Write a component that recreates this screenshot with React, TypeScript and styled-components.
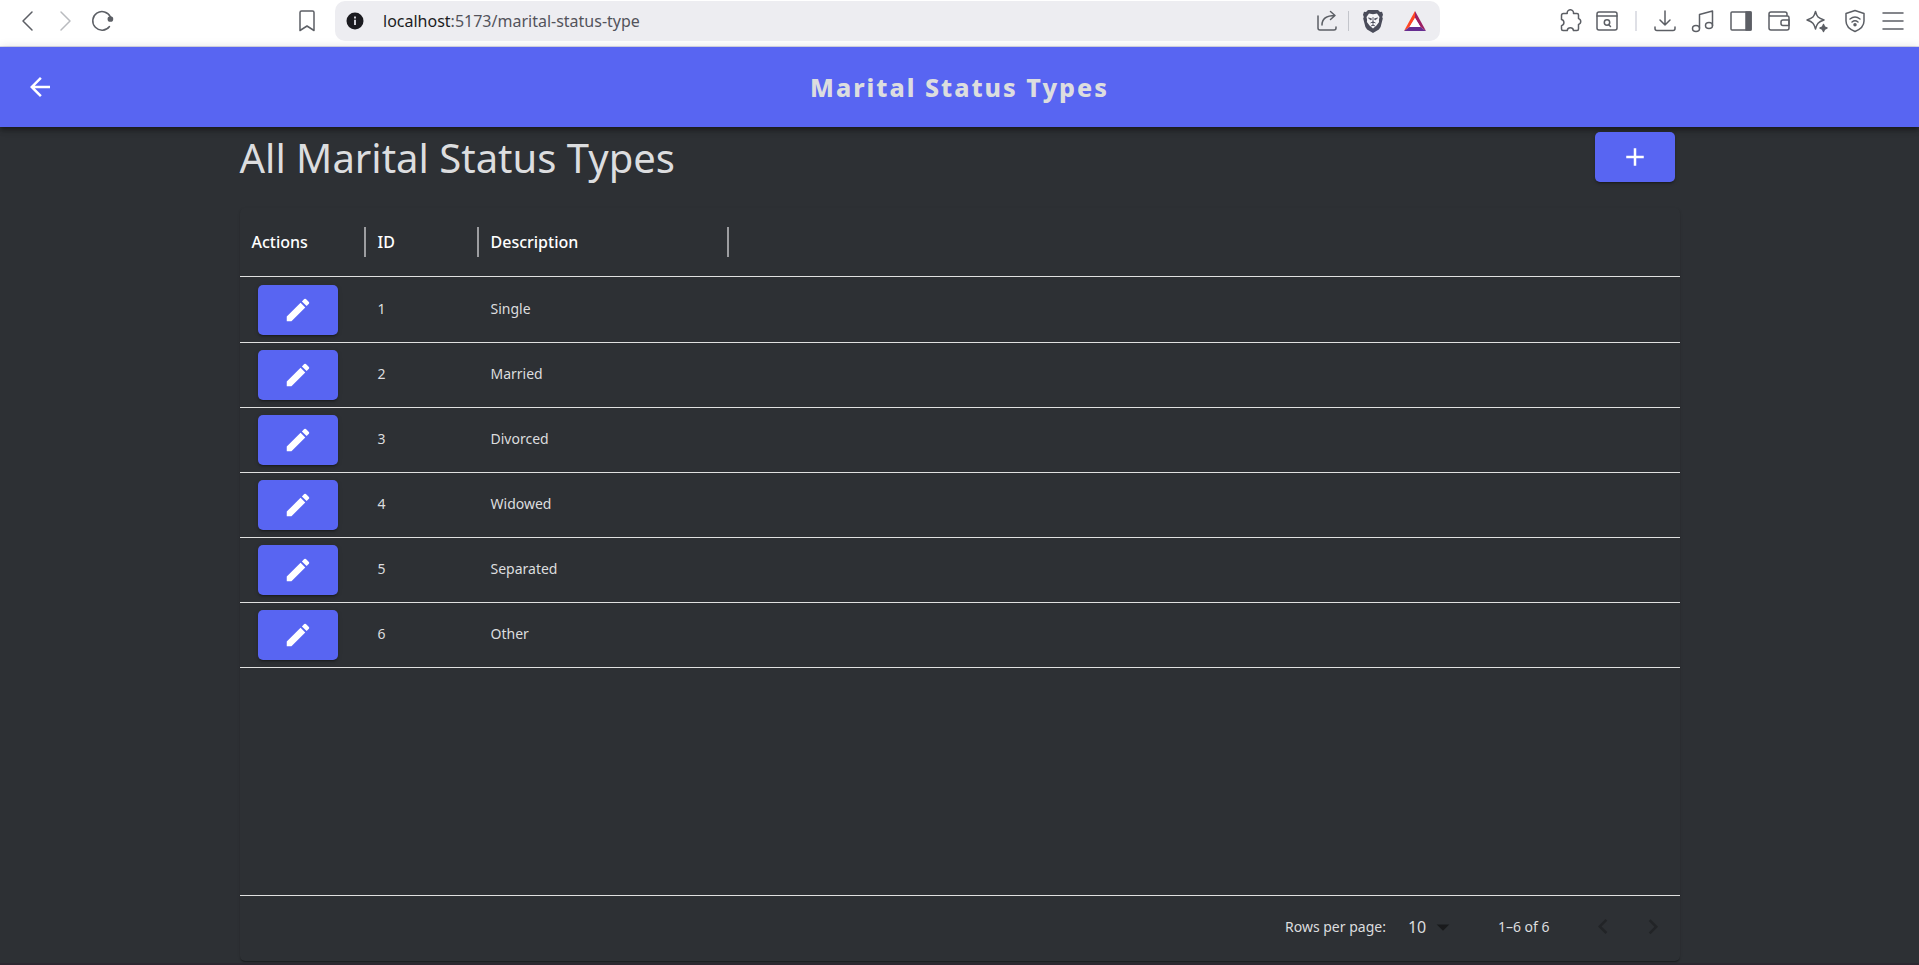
import React from "react";
import styled, { createGlobalStyle } from "styled-components";

const GlobalStyle = createGlobalStyle`
  * { box-sizing: border-box; }
  body {
    margin: 0;
    background: #2d3034;
    color: #dcdddf;
    font-family: Tahoma, "Noto Sans", sans-serif;
  }
  button { font: inherit; border: 0; padding: 0; background: none; color: inherit; cursor: pointer; }
  svg { flex-shrink: 0; }
`;

/* Browser bar */
const BrowserBar = styled.div`
  display: flex;
  align-items: center;
  height: 47px;
  padding: 0 14px 4px 15px;
  background: #ffffff;
  border-bottom: 1px solid #dedeee;
`;

const NavGroup = styled.div`
  display: flex;
  align-items: center;
  gap: 14px;
  flex: 0 1 320px;
`;

const BarButton = styled.button<{ $faded?: boolean }>`
  display: flex;
  width: 24px;
  height: 24px;
  align-items: center;
  justify-content: center;
  color: ${(p) => (p.$faded ? "#b9bbbf" : "#5c5f65")};
`;

const Bookmark = styled(BarButton)`
  margin-left: auto;
  margin-right: 16px;
`;

const AddressBar = styled.div`
  display: flex;
  align-items: center;
  flex: 0 1 1105px;
  height: 40px;
  padding: 0 13px 0 8px;
  border-radius: 10px;
  background: #ededf1;
  gap: 16px;
`;

const Url = styled.div`
  flex: 1;
  font-family: "Segoe UI", "Noto Sans", sans-serif;
  font-size: 16px;
  line-height: 24px;
  color: #53535b;
`;

const Host = styled.span`
  color: #1b1b22;
`;

const Divider = styled.span<{ $color: string; $width: number }>`
  width: ${(p) => p.$width}px;
  height: 20px;
  background: ${(p) => p.$color};
`;

const AddressActions = styled.div`
  display: flex;
  align-items: center;
  gap: 9px;
`;

const ShieldGroup = styled.div`
  display: flex;
  gap: 18px;
  margin-left: 3px;
`;

const ToolGroup = styled.div`
  display: flex;
  flex: 1;
  align-items: center;
  justify-content: flex-end;
  gap: 16px;
`;

const ToolCluster = styled.div<{ $gap: number }>`
  display: flex;
  align-items: center;
  gap: ${(p) => p.$gap}px;
`;

/* Application */
const AppBar = styled.header`
  display: grid;
  grid-template-columns: 80px 1fr 80px;
  align-items: center;
  height: 80px;
  background: #5865f2;
  box-shadow: 0 2px 4px -1px rgba(0, 0, 0, 0.3), 0 4px 5px rgba(0, 0, 0, 0.2), 0 1px 10px rgba(0, 0, 0, 0.14);
`;

const BackButton = styled.button`
  display: flex;
  justify-content: center;
  color: #ffffff;
`;

const AppTitle = styled.h1`
  margin: 0;
  text-align: center;
  font-size: 25px;
  line-height: 32px;
  font-weight: 800;
  letter-spacing: 2px;
`;

const Page = styled.main`
  width: 100%;
  max-width: 1440px;
  margin: 0 auto;
  padding: 5px 0 2px;
`;

const PageHead = styled.div`
  display: flex;
  justify-content: space-between;
  align-items: flex-start;
  height: 76px;
  padding-right: 5px;
`;

const PageTitle = styled.h2`
  margin: 0;
  font-size: 40px;
  line-height: 52px;
  font-weight: 400;
`;

const PrimaryButton = styled.button`
  display: flex;
  width: 80px;
  height: 50px;
  align-items: center;
  justify-content: center;
  border-radius: 5px;
  background: #5865f2;
  color: #ffffff;
  box-shadow: 0 3px 1px -2px rgba(0, 0, 0, 0.2), 0 2px 2px rgba(0, 0, 0, 0.14), 0 1px 5px rgba(0, 0, 0, 0.12);
`;

const Panel = styled.section`
  border-radius: 5px;
  box-shadow: 0 2px 1px -1px rgba(0, 0, 0, 0.2), 0 1px 1px rgba(0, 0, 0, 0.14), 0 1px 3px rgba(0, 0, 0, 0.12);
`;

const TableArea = styled.div`
  min-height: 688px;
  border-bottom: 1px solid #e0e0e0;
`;

const Table = styled.table`
  width: 100%;
  table-layout: fixed;
  border-collapse: separate;
  border-spacing: 0;

  tbody::before {
    content: "";
    display: block;
    height: 1px;
  }
`;

const HeadCell = styled.th<{ $width?: number }>`
  width: ${(p) => (p.$width ? p.$width + "px" : "auto")};
  height: 69px;
  padding: 0;
  border-bottom: 1px solid #e0e0e0;
  text-align: left;
  font-size: 16px;
  font-weight: 500;
  color: #ffffff;
`;

const HeadLabel = styled.div`
  height: 30px;
  padding-left: 12px;
  line-height: 30px;
  border-right: 2px solid #9c9da0;
`;

const Cell = styled.td`
  height: 65px;
  padding: 0 12px 2px;
  border-bottom: 1px solid #e0e0e0;
  font-size: 14px;
  line-height: 20px;
`;

const ActionCell = styled(Cell)`
  padding: 7px 18px;
`;

const Footer = styled.footer`
  display: flex;
  align-items: center;
  justify-content: flex-end;
  height: 65px;
  padding: 0 2px 4px 0;
  font-size: 14px;
`;

const RowsLabel = styled.label`
  margin-right: 22px;
`;

const SelectWrap = styled.div`
  display: grid;
  align-items: center;
  margin-right: 45px;
`;

const RowsSelect = styled.select`
  grid-area: 1 / 1;
  width: 45px;
  height: 30px;
  padding: 0;
  border: 0;
  appearance: none;
  background: transparent;
  color: inherit;
  font: inherit;
  font-size: 16px;
`;

const Caret = styled.span`
  grid-area: 1 / 1;
  justify-self: end;
  display: flex;
  width: 20px;
  justify-content: center;
  color: #191a1c;
  pointer-events: none;
`;

const Range = styled.span`
  margin-right: 28px;
`;

const PageButton = styled.button`
  display: flex;
  width: 50px;
  height: 50px;
  align-items: center;
  justify-content: center;
  color: #222427;
`;

const BottomEdge = styled.div`
  height: 2px;
  background: #2c2730;
`;

const MaterialIcon = ({ d }: { d: string }) => (
  <svg width="30" height="30" viewBox="0 0 24 24" fill="currentColor" aria-hidden="true">
    <path d={d} />
  </svg>
);

const paths = {
  back: "M20 11H7.83l5.59-5.59L12 4l-8 8 8 8 1.41-1.41L7.83 13H20z",
  add: "M19 13h-6v6h-2v-6H5v-2h6V5h2v6h6z",
  edit: "M3 17.25V21h3.75L17.81 9.94l-3.75-3.75zM20.71 7.04c.39-.39.39-1.02 0-1.41l-2.34-2.34a1 1 0 0 0-1.41 0l-1.83 1.83 3.75 3.75z",
  caret: "M7 10l5 5 5-5z",
  left: "M15.41 16.09l-4.58-4.59 4.58-4.59L14 5.5l-6 6 6 6z",
  right: "M8.59 16.34l4.58-4.59-4.58-4.59L10 5.75l6 6-6 6z",
};

const LineIcon = ({ children }: { children: React.ReactNode }) => (
  <svg
    width="24"
    height="24"
    viewBox="0 0 24 24"
    fill="none"
    stroke="currentColor"
    strokeWidth="1.5"
    strokeLinecap="round"
    strokeLinejoin="round"
    aria-hidden="true"
  >
    {children}
  </svg>
);

const statuses = ["Single", "Married", "Divorced", "Widowed", "Separated", "Other"];

export default function App() {
  return (
    <>
      <GlobalStyle />
      <BrowserBar>
        <NavGroup>
          <BarButton aria-label="Back">
            <LineIcon><path d="M17 3 8 12l9 9" /></LineIcon>
          </BarButton>
          <BarButton aria-label="Forward" $faded>
            <LineIcon><path d="m8 3 9 9-9 9" /></LineIcon>
          </BarButton>
          <BarButton aria-label="Reload">
            <LineIcon>
              <path d="M18.500 17.500A9.300 9.300 0 1 1 19.500 8" />
              <circle cx="19.400" cy="10" r="2.100" fill="currentColor" />
            </LineIcon>
          </BarButton>
          <Bookmark aria-label="Bookmark">
            <LineIcon><path d="M5 3.500a1.500 1.500 0 0 1 1.500-1.500h11A1.500 1.500 0 0 1 19 3.500V21.500l-7-4.500-7 4.500z" /></LineIcon>
          </Bookmark>
        </NavGroup>
        <AddressBar>
          <BarButton aria-label="Site information">
            <svg width="18" height="18" viewBox="0 0 18 18" aria-hidden="true">
              <circle cx="9" cy="9" r="8.500" fill="#1b1b20" />
              <path d="M8 7.800h2V13H8zM8 4.600h2v2H8z" fill="#d0d0d6" />
            </svg>
          </BarButton>
          <Url><Host>localhost</Host>:5173/marital-status-type</Url>
          <AddressActions>
            <BarButton aria-label="Share">
              <LineIcon>
                <path d="M3 7v12a2 2 0 0 0 2 2h14a2 2 0 0 0 2-2v-1" />
                <path d="M7 16c0-6 4-9.500 13-9.500M15.500 2.500l4.500 4-4.500 4" />
              </LineIcon>
            </BarButton>
            <Divider $color="#c3c5cb" $width={1} />
            <ShieldGroup>
              <BarButton aria-label="Shields">
                <svg width="22" height="24" viewBox="0 0 22 24" aria-hidden="true">
                  <path d="M6 1h10l2 2 2-.2 1 3-.8 2.200.6 1.500-2.200 8.500-1.700 2.500L11 24l-5.900-3.500L3.400 18 1.200 9.500l.6-1.500L1 5.800l1-3L4 3z" fill="#4a4c5a" />
                  <path d="m7 4.500 4 .7 4-.7 2.500 3.500-.6 3 .2 2-2.600 3.500L11 19.500l-3.500-3L4.900 13l.2-2-.6-3z" fill="#f5f5f8" />
                  <path d="m6.500 9 3 .8-.6 1.200zM15.500 9l-3 .8.6 1.200zM11 8v5M8.500 14l2.500-1.200 2.500 1.200M11 13v3M9 17l2-1 2 1" fill="#4a4c5a" stroke="#4a4c5a" strokeWidth=".8" />
                </svg>
              </BarButton>
              <BarButton aria-label="Rewards">
                <svg width="24" height="22" viewBox="0 0 24 22" aria-hidden="true">
                  <path d="M12 1v7L6.500 17 1 21z" fill="#ff4724" />
                  <path d="M12 1v7l5.500 9 5.500 4z" fill="#9e1f63" />
                  <path d="m1 21 5.500-4h11l5.500 4z" fill="#662d91" />
                  <path d="m12 8 5.500 9h-11z" fill="#fff" />
                </svg>
              </BarButton>
            </ShieldGroup>
          </AddressActions>
        </AddressBar>
        <ToolGroup>
          <ToolCluster $gap={12}>
            <BarButton aria-label="Extensions">
              <LineIcon>
                <path d="M2.500 6.500q0-2 2-2h3.700a3.200 3.200 0 1 1 6.300 0H18q1.500 0 1.500 1.500v3.600a3 3 0 0 1 0 5.800V20q0 1.500-1.500 1.500h-3.500a3.200 3.200 0 0 0-6.300 0H4q-1.500 0-1.500-1.500v-3.300a3.200 3.200 0 0 0 0-6.200z" />
              </LineIcon>
            </BarButton>
            <BarButton aria-label="Search page">
              <LineIcon>
                <rect x="2" y="3" width="20" height="18" rx="2" />
                <path d="M2 7h20m-6.500 10.500-2-2" />
                <circle cx="12" cy="13.500" r="2.700" />
              </LineIcon>
            </BarButton>
          </ToolCluster>
          <Divider $color="#dfe0e6" $width={2} />
          <ToolCluster $gap={14}>
            <BarButton aria-label="Downloads">
              <LineIcon>
                <path d="M12 2v14m-5-5 5 5 5-5M2 18v1.500a2 2 0 0 0 2 2h16a2 2 0 0 0 2-2V18" />
              </LineIcon>
            </BarButton>
            <BarButton aria-label="Music">
              <LineIcon>
                <ellipse cx="5" cy="19.500" rx="3.500" ry="3" />
                <ellipse cx="18" cy="16.500" rx="3.500" ry="3" />
                <path d="M8.500 19V5.500l13-3.500v14.500" />
              </LineIcon>
            </BarButton>
            <BarButton aria-label="Side panel">
              <LineIcon>
                <rect x="2" y="3" width="20" height="18" rx="1" />
                <path d="M17 3h5v18h-5z" fill="currentColor" />
              </LineIcon>
            </BarButton>
            <BarButton aria-label="Wallet">
              <LineIcon>
                <path d="M20 7V5a2 2 0 0 0-2-2H4a2 2 0 0 0-2 2v14a2 2 0 0 0 2 2h16a2 2 0 0 0 2-2V8.500A1.500 1.500 0 0 0 20.500 7H3.500A1.500 1.500 0 0 1 2 5.500" />
                <path d="M22 11h-6a2 2 0 0 0-2 2v1.500a2 2 0 0 0 2 2h6z" />
              </LineIcon>
            </BarButton>
            <BarButton aria-label="Assistant">
              <LineIcon>
                <path d="M10.500 2.500c1.500 5.500 2.500 6.500 8.500 8.500-6 2-7 3.500-8.500 9-1.500-5.500-2.500-7-8.500-9 6-2 7-3 8.500-8.500z" />
                <path d="M18.500 15.500q.5 3 3.500 3.500-3 .5-3.500 3.500-.5-3-3.500-3.500 3-.5 3.500-3.500z" fill="currentColor" />
              </LineIcon>
            </BarButton>
            <BarButton aria-label="VPN">
              <LineIcon>
                <path d="m12 1.500 9 3v7.500c0 5-4 8.500-9 10.500-5-2-9-5.500-9-10.500V4.500z" />
                <path d="M7 10q5-4 10 0M9 13q3-2.400 6 0" />
                <circle cx="12" cy="15.700" r="1" fill="currentColor" />
              </LineIcon>
            </BarButton>
            <BarButton aria-label="Menu">
              <LineIcon><path d="M2 4h20M2 12h20M2 20h20" /></LineIcon>
            </BarButton>
          </ToolCluster>
        </ToolGroup>
      </BrowserBar>

      <AppBar>
        <BackButton aria-label="Go back"><MaterialIcon d={paths.back} /></BackButton>
        <AppTitle>Marital Status Types</AppTitle>
      </AppBar>

      <Page>
        <PageHead>
          <PageTitle>All Marital Status Types</PageTitle>
          <PrimaryButton aria-label="Add"><MaterialIcon d={paths.add} /></PrimaryButton>
        </PageHead>
        <Panel>
          <TableArea>
            <Table>
              <thead>
                <tr>
                  <HeadCell $width={126}><HeadLabel>Actions</HeadLabel></HeadCell>
                  <HeadCell $width={113}><HeadLabel>ID</HeadLabel></HeadCell>
                  <HeadCell $width={250}><HeadLabel>Description</HeadLabel></HeadCell>
                  <HeadCell />
                </tr>
              </thead>
              <tbody>
                {statuses.map((name, i) => (
                  <tr key={name}>
                    <ActionCell>
                      <PrimaryButton aria-label={`Edit ${name}`}><MaterialIcon d={paths.edit} /></PrimaryButton>
                    </ActionCell>
                    <Cell>{i + 1}</Cell>
                    <Cell>{name}</Cell>
                    <Cell />
                  </tr>
                ))}
              </tbody>
            </Table>
          </TableArea>
          <Footer>
            <RowsLabel htmlFor="rows">Rows per page:</RowsLabel>
            <SelectWrap>
              <RowsSelect id="rows" defaultValue="10">
                <option>10</option>
              </RowsSelect>
              <Caret><MaterialIcon d={paths.caret} /></Caret>
            </SelectWrap>
            <Range>1–6 of 6</Range>
            <PageButton aria-label="Previous page" disabled><MaterialIcon d={paths.left} /></PageButton>
            <PageButton aria-label="Next page" disabled><MaterialIcon d={paths.right} /></PageButton>
          </Footer>
        </Panel>
      </Page>
      <BottomEdge />
    </>
  );
}
